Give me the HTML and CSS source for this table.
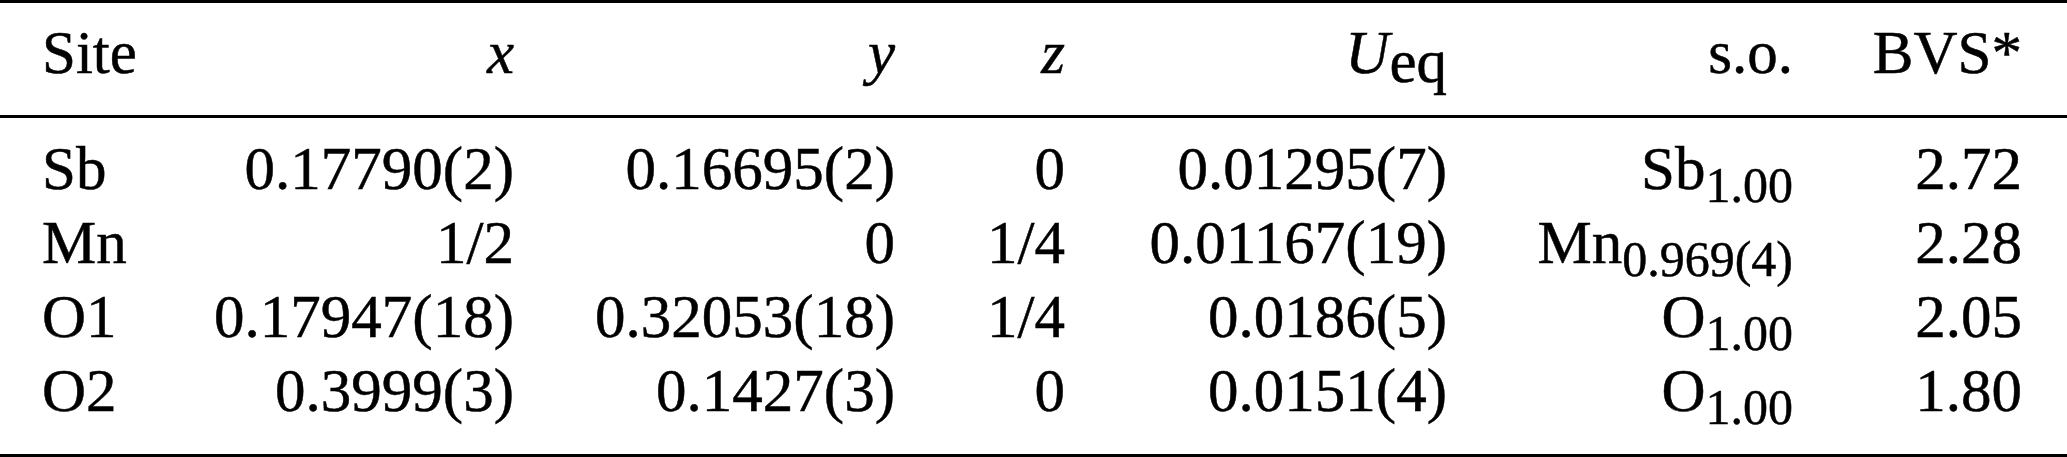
FILE: index.html
```html
<!DOCTYPE html>
<html lang="en">
<head>
    <meta charset="UTF-8">
    <meta name="viewport" content="width=device-width, initial-scale=1.0">
    <title>Site parameters</title>
    <link rel="stylesheet" href="styles.css">
</head>
<body>
    <!-- Таблица параметров позиций -->
    <table class="sites">
        <colgroup>
            <col class="col-site">
            <col class="col-x">
            <col class="col-y">
            <col class="col-z">
            <col class="col-u">
            <col class="col-so">
            <col class="col-bvs">
        </colgroup>
        <thead>
            <tr>
                <th class="site">Site</th>
                <th><i>x</i></th>
                <th><i>y</i></th>
                <th><i>z</i></th>
                <th><i>U</i><span class="low">eq</span></th>
                <th>s.o.</th>
                <th class="last">BVS*</th>
            </tr>
        </thead>
        <tbody>
            <tr class="first">
                <td class="site">Sb</td>
                <td>0.17790(2)</td>
                <td>0.16695(2)</td>
                <td>0</td>
                <td>0.01295(7)</td>
                <td>Sb<span class="sub">1.00</span></td>
                <td class="last">2.72</td>
            </tr>
            <tr>
                <td class="site">Mn</td>
                <td>1/2</td>
                <td>0</td>
                <td>1/4</td>
                <td>0.01167(19)</td>
                <td>Mn<span class="sub">0.969(4)</span></td>
                <td class="last">2.28</td>
            </tr>
            <tr>
                <td class="site">O1</td>
                <td>0.17947(18)</td>
                <td>0.32053(18)</td>
                <td>1/4</td>
                <td>0.0186(5)</td>
                <td>O<span class="sub">1.00</span></td>
                <td class="last">2.05</td>
            </tr>
            <tr class="end">
                <td class="site">O2</td>
                <td>0.3999(3)</td>
                <td>0.1427(3)</td>
                <td>0</td>
                <td>0.0151(4)</td>
                <td>O<span class="sub">1.00</span></td>
                <td class="last">1.80</td>
            </tr>
        </tbody>
    </table>
</body>
</html>
```

FILE: styles.css
```css
/* Таблица в стиле статьи */
body {
    margin: 0;
    padding: 0;
    background-color: #fff;
    color: #000;
    font-family: "Liberation Serif", "Times New Roman", serif;
}

.sites {
    width: 2067px;
    table-layout: fixed;
    border-collapse: separate;
    border-spacing: 0;
    font-size: 61px;
    line-height: 74px;
    -webkit-text-stroke: 0.5px #000; /* чуть плотнее штрих, как в оригинале */
}

/* Ширины колонок: правый край = край текста */
.col-site { width: 200px; }
.col-x { width: 314px; }
.col-y { width: 381px; }
.col-z { width: 170px; }
.col-u { width: 382px; }
.col-so { width: 346px; }
.col-bvs { width: 274px; }

.sites th,
.sites td {
    padding: 0;
    text-align: right;
    font-weight: normal;
    white-space: nowrap;
    vertical-align: baseline;
}

.sites th {
    border-top: 3px solid #000;
    border-bottom: 3px solid #000;
    padding-top: 13px;
    padding-bottom: 25px;
}

.sites .site {
    text-align: left;
    padding-left: 42px;
}

.sites .last {
    padding-right: 45px;
}

.first td {
    padding-top: 14px;
}

.end td {
    padding-bottom: 26px;
    border-bottom: 3px solid #000;
}

/* Индекс U_eq — тот же кегль, ниже строки */
.low {
    font-family: "Liberation Serif", "Times New Roman", serif;
    vertical-align: -9px;
    line-height: 0;
}

/* Нижние индексы заселённости */
.sub {
    font-size: 50px;
    vertical-align: -13px;
    line-height: 0;
}
```
